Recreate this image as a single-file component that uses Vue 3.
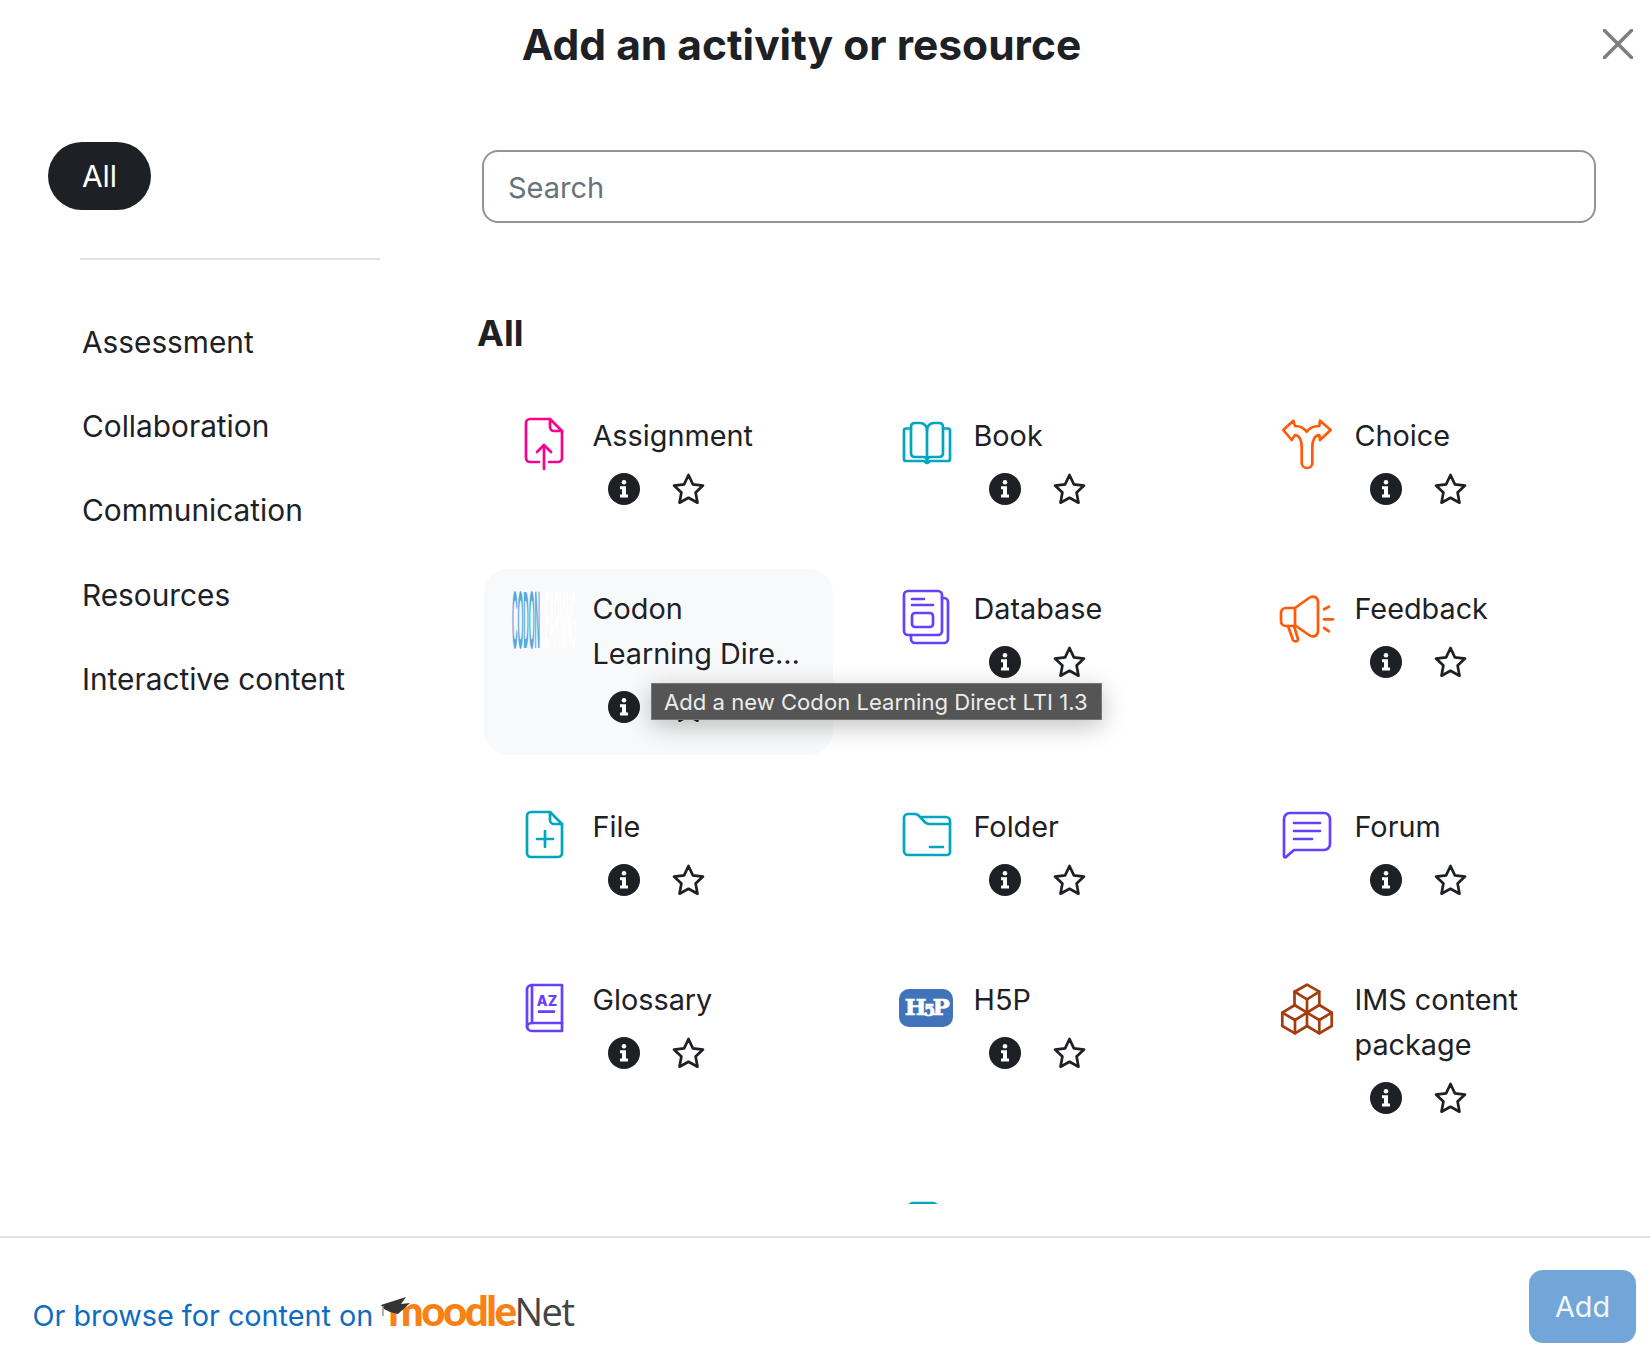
<script setup>
const teal = '#00a6bd'
const purple = '#6640ff'
const orange = '#ff5a0a'
const items = [
  { name: 'Assignment', color: '#f7008c', paths: ['M27 50H18a4 4 0 0 1-4-4V11a4 4 0 0 1 4-4h20l12 12v27a4 4 0 0 1-4 4h-9', 'M38 7v8a4 4 0 0 0 4 4h8', 'M32 57V33', 'M25 40l7-7 7 7'] },
  { name: 'Book', color: teal, paths: ['M18 16.500H13a2 2 0 0 0-2 2V47a2 2 0 0 0 2 2h17.500c1.500 0 2 2 3.500 2s2-2 3.500-2H55a2 2 0 0 0 2-2V18.500a2 2 0 0 0-2-2h-5', 'M34 49V18c0-4-3-7-7-7h-5c-2.500 0-4 1.500-4 4v26c0 2.500 1.500 4 4 4h8c2 0 4 1 4 4', 'M34 18c0-4 3-7 7-7h5c2.500 0 4 1.500 4 4v26c0 2.500-1.500 4-4 4h-8c-2 0-4 1-4 4'] },
  { name: 'Choice', color: orange, paths: ['M9.300 18L19.300 8.700 21 14c5 0 9 2 11.700 5.700C35.500 16 40 14 45.300 14L46 8.700 56.700 18 46 28l-.7-5c-4.300 0-7 5-7 11.700V51a5.300 5 0 0 1-10.600 0V34.700C27.700 28 25 23 21 23l-3.300 5Z'] },
  { name: 'Codon Learning Direct LTI 1.3', kind: 'codon', hover: true },
  { name: 'Database', color: purple, paths: ['M15 6h30a4 4 0 0 1 4 4v36a4 4 0 0 1-4 4H15a4 4 0 0 1-4-4V10a4 4 0 0 1 4-4Z', 'M49 13h2a4 4 0 0 1 4 4v37a4 4 0 0 1-4 4H22a4 4 0 0 1-4-4v-4', 'M19 14h12', 'M19 20h21', 'M22 28h15a3 3 0 0 1 3 3v8a3 3 0 0 1-3 3H22a3 3 0 0 1-3-3v-8a3 3 0 0 1 3-3Z'] },
  { name: 'Feedback', color: orange, paths: ['M21 23l14-10c4-3 9-1 9 4v29c0 5-5 7-9 4L22 41H12c-3 0-5-2-5-5v-8c0-3 2-5 5-5Z', 'M21 23v18', 'M14 41l5 14c1 2 5 2 5-1l-4-13', 'M50 24.300l5-2.600', 'M50 34.300h9', 'M50 43l5 3.300'] },
  { name: 'File', color: teal, paths: ['M38 9H19a4 4 0 0 0-4 4v37a4 4 0 0 0 4 4h27a4 4 0 0 0 4-4V21Z', 'M38 9v8a4 4 0 0 0 4 4h8', 'M33 28v16', 'M25 36h16'] },
  { name: 'Folder', color: teal, paths: ['M11 15a4 4 0 0 1 4-4h7c3 0 4 1.500 6 4l2 2c2 3 4 4 7 4h20v28a3 3 0 0 1-3 3H15a4 4 0 0 1-4-4Z', 'M29 14h24a4 4 0 0 1 4 4v3', 'M37 44h13'] },
  { name: 'Forum', color: purple, paths: ['M10 53V16a6 6 0 0 1 6-6h34a6 6 0 0 1 6 6v25a6 6 0 0 1-6 6H20l-8 7c-1 .8-2 .3-2-1Z', 'M20 20h26', 'M20 28h26', 'M20 36h18'] },
  { name: 'Glossary', kind: 'glossary', color: purple, paths: ['M50 9H20c-3 0-5 2-5 5v36c0 3 2 5 5 5h30Z', 'M20 9v38', 'M50 47H20c-3 0-5 2-5 4', 'M27 35.700h15'] },
  { name: 'H5P', kind: 'h5p' },
  { name: 'IMS content package', color: '#a33c0f', paths: ['M33 8.700l12.300 7V29L33 36.700 20.500 29V15.700Z', 'M20.500 15.700L33 23.300l12.300-7.600', 'M33 23.300v13.400', 'M21 29L8.300 36.700V50L21 57.300 33 50V36.700', 'M8.300 36.700L21 44l12-7.300', 'M21 44v13.300', 'M45.300 29l12.400 7.700V50l-12.400 7.300L33 50', 'M33 36.700L45.300 44l12.400-7.300', 'M45.300 44v13.300'] },
  { empty: true },
  { name: '', iconOnly: true, color: teal, paths: ['M16 56V13a4 4 0 0 1 4-4h20a4 4 0 0 1 4 4v43'] }
]
const categories = ['Assessment', 'Collaboration', 'Communication', 'Resources', 'Interactive content']
</script>

<template>
  <div class="modal">
    <header class="head">
      <h1 class="title">Add an activity or resource</h1>
      <button class="close" aria-label="Close">
        <svg viewBox="0 0 30 30" width="30" height="30"><path d="M1.500 1.500l27 27M28.500 1.500l-27 27" /></svg>
      </button>
    </header>

    <section class="body">
      <aside class="side">
        <div class="pill">All</div>
        <div class="rule"></div>
        <nav class="nav">
          <a v-for="c in categories" :key="c" class="nav-item">{{ c }}</a>
        </nav>
      </aside>

      <main class="main">
        <div class="search">Search</div>
        <h2 class="heading">All</h2>
        <div class="grid">
          <template v-for="(it, i) in items" :key="i">
            <div v-if="it.empty"></div>
            <article v-else class="card" :class="{ hover: it.hover }">
              <div class="ico">
                <svg v-if="it.kind === 'codon'" viewBox="0 0 64 64" width="64" height="64">
                  <text x="0" y="63" font-size="82" textLength="28" lengthAdjust="spacingAndGlyphs" fill="#55a8e0" class="codon">CODON</text>
                  <text x="29" y="63" font-size="82" textLength="35" lengthAdjust="spacingAndGlyphs" fill="#ffffff" class="codon">LEARNING</text>
                </svg>
                <svg v-else-if="it.kind === 'h5p'" viewBox="0 0 64 64" width="64" height="64">
                  <rect x="6" y="13" width="54" height="38" rx="10" fill="#4073b9" />
                  <text x="33" y="39" text-anchor="middle" class="h5p" fill="#fff" stroke="#fff" stroke-width="0.700">H<tspan font-size="16" dy="1">5</tspan><tspan dy="-1">P</tspan></text>
                </svg>
                <svg v-else viewBox="0 0 64 64" width="64" height="64" fill="none" :stroke="it.color" stroke-width="2.700" stroke-linecap="round" stroke-linejoin="round">
                  <path v-for="d in it.paths" :key="d" :d="d" />
                  <text v-if="it.kind === 'glossary'" x="35" y="30" text-anchor="middle" class="az" :fill="it.color" stroke="none">AZ</text>
                </svg>
              </div>
              <div v-if="!it.iconOnly" class="info">
                <div class="name">{{ it.name }}</div>
                <div class="actions">
                  <svg viewBox="0 0 32 32" width="32" height="32">
                    <circle cx="16" cy="16" r="16" fill="#1d2125" />
                    <circle cx="16" cy="9.300" r="2.300" fill="#fff" />
                    <path d="M12 13.300h6v8.200h2v2.900h-8v-2.900h2v-5.300h-2z" fill="#fff" />
                  </svg>
                  <svg viewBox="0 0 33 32" width="33" height="32">
                    <path d="M16.500 2l4.400 9.300 10.100 1.300-7.400 7 1.900 10.100-9-4.900-9 4.900 1.900-10.100-7.400-7 10.100-1.300Z" fill="none" stroke="#1d2125" stroke-width="2.700" stroke-linejoin="round" />
                  </svg>
                </div>
              </div>
            </article>
          </template>
        </div>
        <div class="tip">Add a new Codon Learning Direct LTI 1.3</div>
      </main>
    </section>

    <footer class="foot">
      <a class="browse">
        <span>Or browse for content on</span>
        <span class="logo">
          <svg class="cap" viewBox="0 0 30 28" width="30" height="28">
            <path d="M0 9L25 1l-5 7 9-1-12 11-8-2-6-3Z" fill="#333" />
            <path d="M2 10v10" stroke="#999" stroke-width="1.500" fill="none" />
          </svg>
          <span class="moodle">moodle</span><span class="net">Net</span>
        </span>
      </a>
      <button class="add">Add</button>
    </footer>
  </div>
</template>

<style>
html, body { margin: 0; background: #fff; }
</style>

<style scoped>
.modal {
  width: 1650px;
  height: 1364px;
  display: flex;
  flex-direction: column;
  overflow: hidden;
  font-family: Inter, "Liberation Sans", sans-serif;
  color: #1d2125;
  background: #fff;
}
.head {
  height: 142px;
  flex: none;
  display: flex;
  align-items: flex-start;
  padding-top: 20px;
  padding-right: 17px;
  box-sizing: border-box;
}
.title {
  flex: 1;
  margin: 0;
  text-align: center;
  font-size: 42.500px;
  line-height: 50px;
  font-weight: 700;
}
.close {
  width: 30px;
  height: 30px;
  margin-top: 9px;
  padding: 0;
  border: 0;
  background: none;
}
.close svg { display: block; }
.close path { stroke: #7f7f7f; stroke-width: 3.600; stroke-linecap: round; fill: none; }

.body {
  height: 1062px;
  flex: none;
  display: flex;
  overflow: hidden;
}
.side {
  width: 477px;
  flex: none;
  box-sizing: border-box;
  padding-left: 48px;
}
.pill {
  width: 103px;
  height: 68px;
  border-radius: 34px;
  background: #1d2125;
  color: #fff;
  font-size: 30px;
  display: flex;
  align-items: center;
  justify-content: center;
}
.rule {
  width: 300px;
  height: 2px;
  margin: 48px 0 40px 32px;
  background: #dee2e6;
}
.nav { display: flex; flex-direction: column; padding-left: 34px; }
.nav-item {
  height: 84.200px;
  display: flex;
  align-items: center;
  font-size: 29.800px;
  color: #1d2125;
}
.main { flex: 1; position: relative; min-width: 0; }
.search {
  width: 1114px;
  height: 73px;
  box-sizing: border-box;
  margin: 8px 0 0 5px;
  border: 2px solid #8f959e;
  border-radius: 16px;
  padding: 2px 0 0 24px;
  display: flex;
  align-items: center;
  font-size: 29px;
  color: #6a737b;
}
.heading {
  margin: 84px 0 36px;
  font-size: 36px;
  line-height: 53px;
  font-weight: 700;
}
.grid {
  margin-left: 7px;
  display: grid;
  grid-template-columns: repeat(3, 349px);
  gap: 32px;
}
.card {
  display: flex;
  box-sizing: border-box;
  padding: 17px 16px 17px 28px;
  border-radius: 24px;
}
.card.hover { background: #f8f9fa; }
.ico { width: 64px; height: 64px; flex: none; margin-top: -1px; margin-right: 16.500px; }
.ico svg { display: block; overflow: visible; }
.name {
  width: 215px;
  font-size: 28.800px;
  line-height: 45px;
  display: -webkit-box;
  -webkit-line-clamp: 2;
  -webkit-box-orient: vertical;
  overflow: hidden;
}
.actions {
  height: 62px;
  padding-left: 15.500px;
  display: flex;
  align-items: center;
  gap: 32px;
}
.codon { font-family: "Liberation Sans", sans-serif; font-weight: 700; }
.h5p { font-family: "DejaVu Serif", serif; font-weight: 700; font-size: 23px; letter-spacing: -2.500px; }
.az { font-family: Inter, sans-serif; font-weight: 800; font-size: 14px; }
.tip {
  position: absolute;
  left: 174px;
  top: 541px;
  height: 37px;
  box-sizing: border-box;
  padding: 0 13px 0 12px;
  display: flex;
  align-items: center;
  white-space: nowrap;
  font-size: 22.100px;
  color: #ececec;
  background: #555;
  border: 1px solid #777;
  box-shadow: 0 6px 24px rgba(0, 0, 0, 0.25);
}
.foot {
  margin-top: 32px;
  flex: 1;
  border-top: 2px solid #dee2e6;
  box-sizing: border-box;
  padding: 32px 14px 0 32.500px;
  display: flex;
  justify-content: space-between;
  align-items: flex-start;
}
.browse {
  margin-top: 18px;
  display: flex;
  align-items: baseline;
  color: #0f6cbf;
  font-size: 28.800px;
  line-height: 45px;
}
.logo {
  position: relative;
  margin-left: 8px;
  padding-left: 7px;
  display: inline-flex;
  align-items: baseline;
}
.cap { position: absolute; left: 0; top: 8px; }
.moodle {
  font-family: Lato, sans-serif;
  font-weight: 900;
  font-size: 42px;
  letter-spacing: -2.500px;
  color: #f98012;
}
.net {
  font-family: "Open Sans", sans-serif;
  font-size: 38px;
  letter-spacing: -1.500px;
  color: #444;
}
.add {
  width: 107px;
  height: 73px;
  border: 0;
  border-radius: 14px;
  background: #73a6d8;
  color: #f2f6fb;
  font-family: Inter, sans-serif;
  font-size: 28.800px;
}
</style>
